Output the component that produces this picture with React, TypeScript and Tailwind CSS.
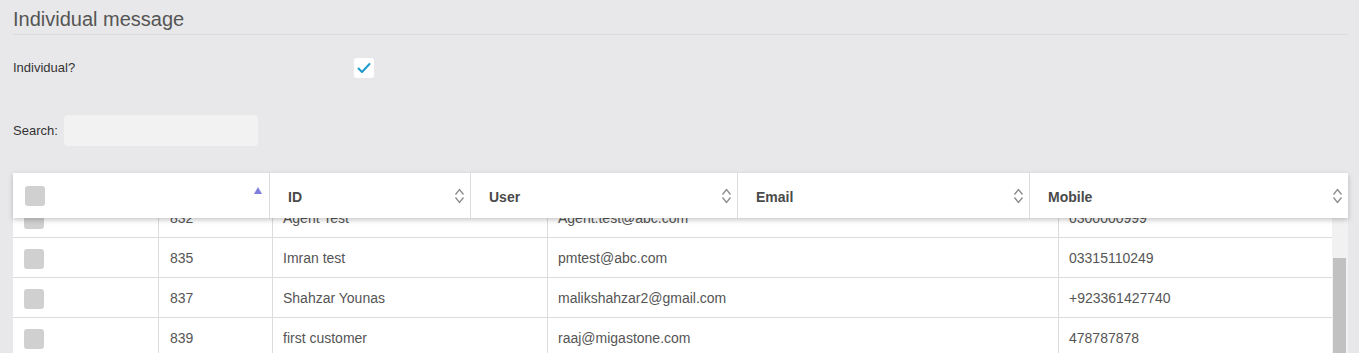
import React from "react";

type Row = { id: string; user: string; email: string; mobile: string };

const rows: Row[] = [
  { id: "832", user: "Agent Test", email: "Agent.test@abc.com", mobile: "0300000999" },
  { id: "835", user: "Imran test", email: "pmtest@abc.com", mobile: "03315110249" },
  { id: "837", user: "Shahzar Younas", email: "malikshahzar2@gmail.com", mobile: "+923361427740" },
  { id: "839", user: "first customer", email: "raaj@migastone.com", mobile: "478787878" },
];

function SortIcon() {
  return (
    <svg width="11" height="18" viewBox="0 0 11 18" fill="none" stroke="#8a8a8a" strokeWidth="1.3">
      <path d="M1.5 7.5 L5.5 2.5 L9.5 7.5" />
      <path d="M1.5 10.5 L5.5 15.5 L9.5 10.5" />
    </svg>
  );
}

function GrayBox() {
  return <div className="w-[20px] h-[20px] rounded-[3px] bg-[#d0d0d0]" />;
}

function HeaderCell({ label, width }: { label: string; width: string }) {
  return (
    <div className={`${width} h-full flex items-center justify-between border-l border-[#dcdcdc] pl-[18px] pr-[5px]`}>
      <span className="text-[14px] font-bold text-[#4a4a4a] pt-[4px]">{label}</span>
      <SortIcon />
    </div>
  );
}

export default function App() {
  return (
    <div
      className="w-[1359px] h-[353px] overflow-hidden bg-[#e8e8ea] pl-[13px] pr-[11px] text-[#555]"
      style={{ fontFamily: '"Liberation Sans", Arial, sans-serif' }}
    >
      <div className="h-[35px] border-b border-[#dcdcde] pt-[7px]">
        <h1 className="text-[20px] leading-[24px] text-[#555]">Individual message</h1>
      </div>

      <div className="mt-[23px] h-[20px] flex items-center">
        <span className="w-[341px] text-[13px] text-[#333]">Individual?</span>
        <div className="w-[20px] h-[20px] rounded-[3px] bg-white flex items-center justify-center">
          <svg width="14" height="12" viewBox="0 0 14 12" fill="none" stroke="#1c9bcc" strokeWidth="2" strokeLinecap="round" strokeLinejoin="round">
            <path d="M1.5 6.5 L5 10 L12.5 2" />
          </svg>
        </div>
      </div>

      <div className="mt-[37px] h-[31px] flex items-center">
        <label className="w-[51px] text-[13px] text-[#333]">Search:</label>
        <input className="w-[194px] h-[31px] rounded-[4px] bg-[#f2f2f2] outline-none px-2 text-[13px]" />
      </div>

      <div className="mt-[27px] w-[1335px]">
        <div className="relative z-10 h-[45px] bg-white flex shadow-[0_2px_5px_rgba(0,0,0,0.22)]">
          <div className="w-[256px] h-full flex items-center justify-between pl-[12px] pr-[7px]">
            <GrayBox />
            <svg width="8" height="7" viewBox="0 0 8 7" className="-mt-[10px]">
              <path d="M4 0 L8 7 L0 7 Z" fill="#7f7fdb" />
            </svg>
          </div>
          <HeaderCell label="ID" width="w-[201px]" />
          <HeaderCell label="User" width="w-[267px]" />
          <HeaderCell label="Email" width="w-[292px]" />
          <HeaderCell label="Mobile" width="w-[319px]" />
        </div>

        <div className="h-[135px] flex overflow-hidden">
          <div className="w-[1319px] bg-white">
            <div className="-mt-[20px]">
              {rows.map((r) => (
                <div key={r.id} className="h-[40px] flex border-b border-[#dcdcdc] text-[14px] text-[#555]">
                  <div className="w-[145px] flex items-center pl-[11px] pt-[2px]">
                    <GrayBox />
                  </div>
                  <div className="w-[114px] flex items-center border-l border-[#dcdcdc] pl-[11px] pt-[2px]">{r.id}</div>
                  <div className="w-[275px] flex items-center border-l border-[#dcdcdc] pl-[10px] pt-[2px]">{r.user}</div>
                  <div className="w-[511px] flex items-center border-l border-[#dcdcdc] pl-[10px] pt-[2px]">{r.email}</div>
                  <div className="w-[274px] flex items-center border-l border-[#dcdcdc] pl-[10px] pt-[2px]">{r.mobile}</div>
                </div>
              ))}
            </div>
          </div>
          <div className="w-[16px] bg-[#f1f1f1] pl-[1px] pt-[40px]">
            <div className="w-[13px] h-[120px] bg-[#c1c1c1]" />
          </div>
        </div>
      </div>
    </div>
  );
}
